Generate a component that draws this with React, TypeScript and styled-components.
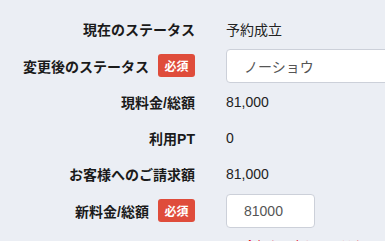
import { FC } from "react";
import styled, { createGlobalStyle } from "styled-components";

const GlobalStyle = createGlobalStyle`
  html, body {
    margin: 0;
    padding: 0;
    background: #ebeef4;
  }
  body {
    font-family: "Liberation Sans", "Noto Sans CJK JP", sans-serif;
    color: #222;
    overflow: hidden;
  }
`;

type RowData = {
  label: string;
  required?: boolean;
  value?: string;
  input?: { value: string; width?: number };
};

const rows: RowData[] = [
  { label: "現在のステータス", value: "予約成立" },
  { label: "変更後のステータス", required: true, input: { value: "ノーショウ" } },
  { label: "現料金/総額", value: "81,000" },
  { label: "利用PT", value: "0" },
  { label: "お客様へのご請求額", value: "81,000" },
  { label: "新料金/総額", required: true, input: { value: "81000", width: 89 } },
];

const App: FC = () => {
  return (
    <>
      <GlobalStyle />
      <Form>
        {rows.map(r => (
          <Row key={r.label} tall={!!r.input}>
            <Label>
              {r.label}
              {r.required && <Badge>必須</Badge>}
            </Label>
            <Field>
              {r.input ? (
                <Input
                  defaultValue={r.input.value}
                  style={r.input.width ? { width: r.input.width } : undefined}
                  wide={!r.input.width}
                />
              ) : (
                <Value>{r.value}</Value>
              )}
            </Field>
          </Row>
        ))}
        <Error>※金額を入力してください</Error>
      </Form>
    </>
  );
};

const Form = styled.div`
  padding-top: 11px;
  display: flex;
  flex-direction: column;
`;

const Row = styled.div<{ tall: boolean }>`
  display: grid;
  grid-template-columns: 195px 1fr;
  column-gap: 31px;
  align-items: center;
  height: ${p => (p.tall ? "37px" : "36px")};
`;

const Label = styled.div`
  display: flex;
  align-items: center;
  justify-content: flex-end;
  font-size: 14px;
  font-weight: bold;
  color: #1a1a1a;
  white-space: nowrap;
`;

const Badge = styled.span`
  display: inline-flex;
  align-items: center;
  justify-content: center;
  width: 37px;
  height: 23px;
  margin-left: 9px;
  background: #df4c3b;
  color: #fff;
  border-radius: 3px;
  font-size: 12px;
  font-weight: bold;
`;

const Field = styled.div`
  display: flex;
  align-items: center;
  min-width: 0;
`;

const Value = styled.span`
  font-size: 14px;
  color: #222;
`;

const Input = styled.input<{ wide: boolean }>`
  box-sizing: border-box;
  height: 34px;
  width: ${p => (p.wide ? "200px" : "auto")};
  padding: 0 0 0 17px;
  border: 1px solid #ccd0d9;
  border-radius: 4px;
  background: #fff;
  font-family: "Liberation Sans", "Noto Sans CJK JP", sans-serif;
  font-size: 14px;
  color: #555;
  outline: none;
`;

const Error = styled.div`
  margin-top: 10px;
  padding-left: 232px;
  font-size: 12px;
  line-height: 16px;
  color: #e60012;
  white-space: nowrap;
`;

export default App;
